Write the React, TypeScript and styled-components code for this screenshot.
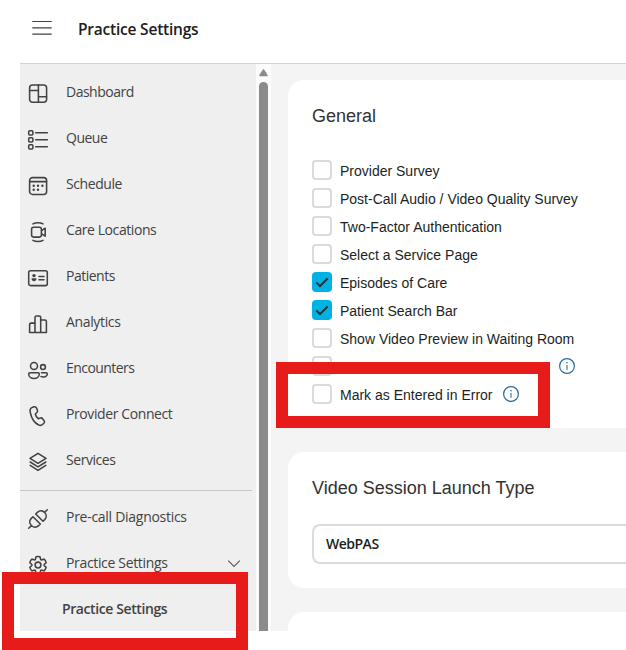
import React from "react";
import styled, { createGlobalStyle } from "styled-components";

const GlobalStyle = createGlobalStyle`
  *, *::before, *::after { box-sizing: border-box; }
  html, body { margin: 0; padding: 0; background: #fff; overflow: hidden; }
`;

const uiFont = `"Segoe UI", "Open Sans", "Noto Sans", sans-serif`;
const formFont = `"Liberation Sans", Arial, sans-serif`;

const Page = styled.div`
  position: relative;
  width: 626px;
  height: 650px;
  overflow: hidden;
  background: #fff;
  font-family: ${uiFont};
`;

const Header = styled.header`
  display: flex;
  align-items: center;
  height: 64px;
  margin-left: 20px;
  padding: 0 0 7px 12px;
  border-bottom: 1px solid #d4d4d4;
`;

const Title = styled.h1`
  margin: 1px 0 0 26px;
  color: #202020;
  font-size: 15.5px;
  font-weight: 600;
  line-height: 22px;
  letter-spacing: -0.21px;
  white-space: nowrap;
`;

const Body = styled.div`
  display: flex;
  height: 567px;
  margin-left: 20px;
`;

const Sidebar = styled.nav`
  flex: none;
  width: 236px;
  height: 100%;
  padding-top: 5px;
  background: #efefef;
  overflow: hidden;
`;

const NavItem = styled.div`
  display: flex;
  align-items: center;
  height: 46px;
  padding: 0 15px 0 8px;
  color: #424242;
`;

const NavIcon = styled.svg`
  flex: none;
  width: 20px;
  height: 20px;
  margin-top: 4px;
  overflow: visible;
  fill: none;
  stroke: #424242;
  stroke-width: 1.55;
  stroke-linecap: round;
  stroke-linejoin: round;
`;

const NavLabel = styled.span<{ $spacing: number }>`
  flex: 1;
  margin-left: 18px;
  font-size: 14px;
  line-height: 20px;
  letter-spacing: ${(p) => p.$spacing}px;
  white-space: nowrap;
`;

const SubItem = styled.div`
  display: flex;
  align-items: center;
  height: 46px;
  padding: 0 0 2px 42px;
  color: #424242;
  font-size: 14px;
  font-weight: 600;
  letter-spacing: -0.4px;
`;

const Divider = styled.hr`
  width: 232px;
  height: 1px;
  margin: 7px 0 3px;
  border: 0;
  background: #c8c8c8;
`;

const ScrollTrack = styled.div`
  display: flex;
  flex: none;
  flex-direction: column;
  align-items: center;
  width: 15px;
  padding-top: 5px;
  background: #fcfcfc;
`;

const ScrollThumb = styled.div`
  flex: 1;
  width: 9px;
  margin-top: 5px;
  border-radius: 4.5px 4.5px 0 0;
  background: #8b8b8b;
`;

const Content = styled.main`
  flex: 1;
  display: flex;
  flex-direction: column;
  gap: 24px;
  min-width: 0;
  height: 100%;
  padding: 16px 0 0 17px;
  overflow: hidden;
  background: #f4f4f4;
`;

const Card = styled.section<{ $height: number }>`
  flex: none;
  height: ${(p) => p.$height}px;
  padding: 24px 0 0 24px;
  border-radius: 16px 0 0 16px;
  background: #fff;
  font-family: ${formFont};
`;

const CardTitle = styled.h2<{ $gap: number }>`
  margin: 0 0 ${(p) => p.$gap}px;
  color: #323130;
  font-size: 18px;
  font-weight: 400;
  line-height: 24px;
`;

const OptionList = styled.div`
  display: flex;
  flex-direction: column;
  gap: 8px;
`;

const Option = styled.label`
  display: flex;
  align-items: center;
  height: 20px;
`;

const CheckBox = styled.span<{ $checked: boolean }>`
  display: flex;
  flex: none;
  width: 20px;
  height: 20px;
  border: ${(p) => (p.$checked ? "0" : "2px solid #dedad8")};
  border-radius: 4px;
  background: ${(p) => (p.$checked ? "#00b2e3" : "#fff")};
`;

const OptionText = styled.span`
  margin: 2px 0 0 8px;
  color: #201f1e;
  font-size: 14px;
  line-height: 20px;
  white-space: nowrap;
`;

const InfoSvg = styled.svg<{ $offset: number }>`
  flex: none;
  width: 16px;
  height: 16px;
  margin-left: ${(p) => p.$offset}px;
`;

const SelectField = styled.div`
  display: flex;
  align-items: center;
  height: 40px;
  padding: 0 0 2px 12px;
  border: 2px solid #dedad8;
  border-right: 0;
  border-radius: 8px 0 0 8px;
  color: #201f1e;
  font: 600 14px ${uiFont};
  letter-spacing: -0.5px;
`;

const Highlight = styled.div<{ $x: number; $y: number; $w: number; $h: number }>`
  position: absolute;
  left: ${(p) => p.$x}px;
  top: ${(p) => p.$y}px;
  width: ${(p) => p.$w}px;
  height: ${(p) => p.$h}px;
  border: 12px solid #e81b1b;
  pointer-events: none;
`;

const icons: Record<string, React.ReactNode> = {
  dashboard: (
    <>
      <rect x="1.6" y="0.9" width="17" height="17.4" rx="3" />
      <path d="M10.4 1v17.2M1.7 6.4h8.7M10.4 12.7h8.1" />
    </>
  ),
  queue: (
    <>
      <rect x="0.7" y="0.7" width="4.2" height="4.2" rx="1" />
      <rect x="0.7" y="7.7" width="4.2" height="4.2" rx="1" />
      <rect x="0.7" y="14.7" width="4.2" height="4.2" rx="1" />
      <path d="M7.7 2.8h11.7M7.7 9.8h11.7M7.7 16.8h11.7" />
    </>
  ),
  schedule: (
    <>
      <rect x="1.6" y="1.6" width="17" height="16.8" rx="3" />
      <path d="M1.7 5.6h16.8" />
      <g fill="#424242" stroke="none">
        <circle cx="5.7" cy="9.8" r="1.2" />
        <circle cx="10" cy="9.8" r="1.2" />
        <circle cx="14.4" cy="9.8" r="1.2" />
        <circle cx="5.7" cy="13.8" r="1.2" />
        <circle cx="10" cy="13.8" r="1.2" />
      </g>
    </>
  ),
  care: (
    <>
      <rect x="3.6" y="5.3" width="9.8" height="9.8" rx="2" />
      <path d="M13.6 8.6l3.6-2.4v8l-3.6-2.4M5 1.9c2.500-1.500 7.500-1.500 10 0M5 18.300c2.500 1.500 7.500 1.500 10 0" />
    </>
  ),
  patients: (
    <>
      <rect x="0.7" y="2.8" width="18.6" height="14.8" rx="1.8" />
      <path d="M11 8.4h5M11 11.7h5" />
      <circle cx="6" cy="7.6" r="1.7" fill="#424242" stroke="none" />
      <path d="M3.500 10.200h5c0 4-5 4-5 0z" fill="#424242" stroke="none" />
    </>
  ),
  analytics: (
    <path d="M1.6 18.4v-7.8a1.5 1.5 0 0 1 1.5-1.5h3.900v9.300zM7 18.400V3.400a1.500 1.500 0 0 1 1.500-1.500h2.700a1.500 1.500 0 0 1 1.500 1.500v15zM12.700 18.400V6h4.200a1.500 1.500 0 0 1 1.500 1.500v10.900z" />
  ),
  encounters: (
    <>
      <circle cx="6" cy="5.9" r="3.5" />
      <circle cx="15" cy="7" r="2.4" />
      <path d="M2 12.700h8a1.300 1.300 0 0 1 1.300 1.300c0 6-10.600 6-10.600 0A1.300 1.300 0 0 1 2 12.700zM13.500 12.700H18a1.300 1.300 0 0 1 1.300 1.300c0 2.700-3.500 3.500-6.300 2.600" />
    </>
  ),
  phone: (
    <path d="M4.6 1.2 6 .8c1-.3 2 .2 2.400 1.100l1 2.300c.3.800.1 1.700-.500 2.300L7.300 8c.4 1.800 1.500 3.600 2.900 4.700l2.200-.7c.8-.300 1.700 0 2.200.7l1.500 2c.6.800.5 1.900-.2 2.600l-1.100 1c-1.100 1.100-2.700 1.300-4.100.700C6.700 17 3.600 12.600 2.400 7 1.700 4.300 1.900 2 4.600 1.200z" />
  ),
  services: (
    <path d="M10 1.3 18 6.300l-8 5-8-5zM2.200 10l7.800 4.900 7.800-4.900M2.200 13.400l7.800 4.900 7.800-4.900" />
  ),
  plug: (
    <path d="M.7 19.300l2.600-2.600M19.300.7l-2.600 2.600M5 7.700l7.300 7.300-1.700 1.700c-5 4.500-11.900-2.400-7.300-7.300zM15 12.300L7.700 5l1.700-1.700c5-4.500 11.900 2.400 7.300 7.300z" />
  ),
  gear: (
    <>
      <path d="M1.91 7.38A8.5 8.5 0 0 1 3.69 4.3a.5.5 0 0 1 .54-.13l1.92.68a1 1 0 0 0 1.32-.76l.36-2a.5.5 0 0 1 .4-.4 8.53 8.53 0 0 1 3.55 0c.2.04.35.2.38.4l.37 2a1 1 0 0 0 1.32.76l1.92-.68a.5.5 0 0 1 .54.13 8.5 8.5 0 0 1 1.78 3.08c.06.2 0 .4-.15.54l-1.56 1.32a1 1 0 0 0 0 1.52l1.56 1.32a.5.5 0 0 1 .15.54 8.5 8.5 0 0 1-1.78 3.08.5.5 0 0 1-.54.13l-1.92-.68a1 1 0 0 0-1.32.76l-.37 2a.5.5 0 0 1-.38.4 8.53 8.53 0 0 1-3.56 0 .5.5 0 0 1-.39-.4l-.36-2a1 1 0 0 0-1.32-.76l-1.92.68a.5.5 0 0 1-.54-.13 8.5 8.5 0 0 1-1.78-3.08.5.5 0 0 1 .15-.54l1.56-1.32a1 1 0 0 0 0-1.52L2.06 7.92a.5.5 0 0 1-.15-.54Z" />
      <circle cx="10" cy="10" r="2.9" />
    </>
  ),
};

interface NavEntry {
  label: string;
  icon: string;
  spacing: number;
  expandable?: boolean;
}

const mainNav: NavEntry[] = [
  { label: "Dashboard", icon: "dashboard", spacing: -0.5 },
  { label: "Queue", icon: "queue", spacing: -0.5 },
  { label: "Schedule", icon: "schedule", spacing: -0.42 },
  { label: "Care Locations", icon: "care", spacing: -0.42 },
  { label: "Patients", icon: "patients", spacing: -0.5 },
  { label: "Analytics", icon: "analytics", spacing: -0.35 },
  { label: "Encounters", icon: "encounters", spacing: -0.55 },
  { label: "Provider Connect", icon: "phone", spacing: -0.4 },
  { label: "Services", icon: "services", spacing: -0.45 },
];

const toolsNav: NavEntry[] = [
  { label: "Pre-call Diagnostics", icon: "plug", spacing: -0.28 },
  { label: "Practice Settings", icon: "gear", spacing: -0.34, expandable: true },
];

const options: { label: string; checked?: boolean; info?: number }[] = [
  { label: "Provider Survey" },
  { label: "Post-Call Audio / Video Quality Survey" },
  { label: "Two-Factor Authentication" },
  { label: "Select a Service Page" },
  { label: "Episodes of Care", checked: true },
  { label: "Patient Search Bar", checked: true },
  { label: "Show Video Preview in Waiting Room" },
  { label: "", info: 227 },
  { label: "Mark as Entered in Error", info: 10 },
];

function NavRow({ entry }: { entry: NavEntry }) {
  return (
    <NavItem>
      <NavIcon viewBox="0 0 20 20">{icons[entry.icon]}</NavIcon>
      <NavLabel $spacing={entry.spacing}>{entry.label}</NavLabel>
      {entry.expandable && (
        <svg width="14" height="14" viewBox="0 0 14 14" fill="none" stroke="#5a5a5a" strokeWidth="1.1">
          <path d="M1.2 4.600 7 10.400l5.800-5.800" />
        </svg>
      )}
    </NavItem>
  );
}

function InfoIcon({ offset }: { offset: number }) {
  return (
    <InfoSvg $offset={offset} viewBox="0 0 16 16" fill="none" stroke="#2b6a9e">
      <circle cx="8" cy="8" r="7.4" strokeWidth="1.2" />
      <path d="M8 7v4.700" strokeWidth="1.1" />
      <circle cx="8" cy="4.8" r="0.8" fill="#2b6a9e" stroke="none" />
    </InfoSvg>
  );
}

export default function App() {
  return (
    <>
      <GlobalStyle />
      <Page>
        <Header>
          <svg width="20" height="16" viewBox="0 0 20 16" stroke="#424242" strokeWidth="1.2">
            <path d="M0.300 1.500h19.400M0.300 7.800h19.400M0.300 14.100h19.400" />
          </svg>
          <Title>Practice Settings</Title>
        </Header>
        <Body>
          <Sidebar>
            {mainNav.map((entry) => (
              <NavRow key={entry.label} entry={entry} />
            ))}
            <Divider />
            {toolsNav.map((entry) => (
              <NavRow key={entry.label} entry={entry} />
            ))}
            <SubItem>Practice Settings</SubItem>
          </Sidebar>
          <ScrollTrack>
            <svg width="9" height="8" viewBox="0 0 9 8">
              <path d="M4.500 1 8 6.500H1z" fill="#8b8b8b" stroke="#8b8b8b" strokeWidth="1.5" strokeLinejoin="round" />
            </svg>
            <ScrollThumb />
          </ScrollTrack>
          <Content>
            <Card $height={348}>
              <CardTitle $gap={32}>General</CardTitle>
              <OptionList>
                {options.map((option, index) => (
                  <Option key={index}>
                    <CheckBox $checked={!!option.checked}>
                      {option.checked && (
                        <svg width="20" height="20" viewBox="0 0 20 20" fill="none" stroke="#2b2b2b" strokeWidth="2">
                          <path d="M4.300 10.400l3.700 3.700 7.700-7.700" />
                        </svg>
                      )}
                    </CheckBox>
                    {option.label && <OptionText>{option.label}</OptionText>}
                    {option.info !== undefined && <InfoIcon offset={option.info} />}
                  </Option>
                ))}
              </OptionList>
            </Card>
            <Card $height={136}>
              <CardTitle $gap={24}>Video Session Launch Type</CardTitle>
              <SelectField>WebPAS</SelectField>
            </Card>
            <Card $height={136} />
          </Content>
        </Body>
        <Highlight $x={276} $y={362} $w={274} $h={66} />
        <Highlight $x={1.5} $y={571.5} $w={246} $h={78} />
      </Page>
    </>
  );
}
